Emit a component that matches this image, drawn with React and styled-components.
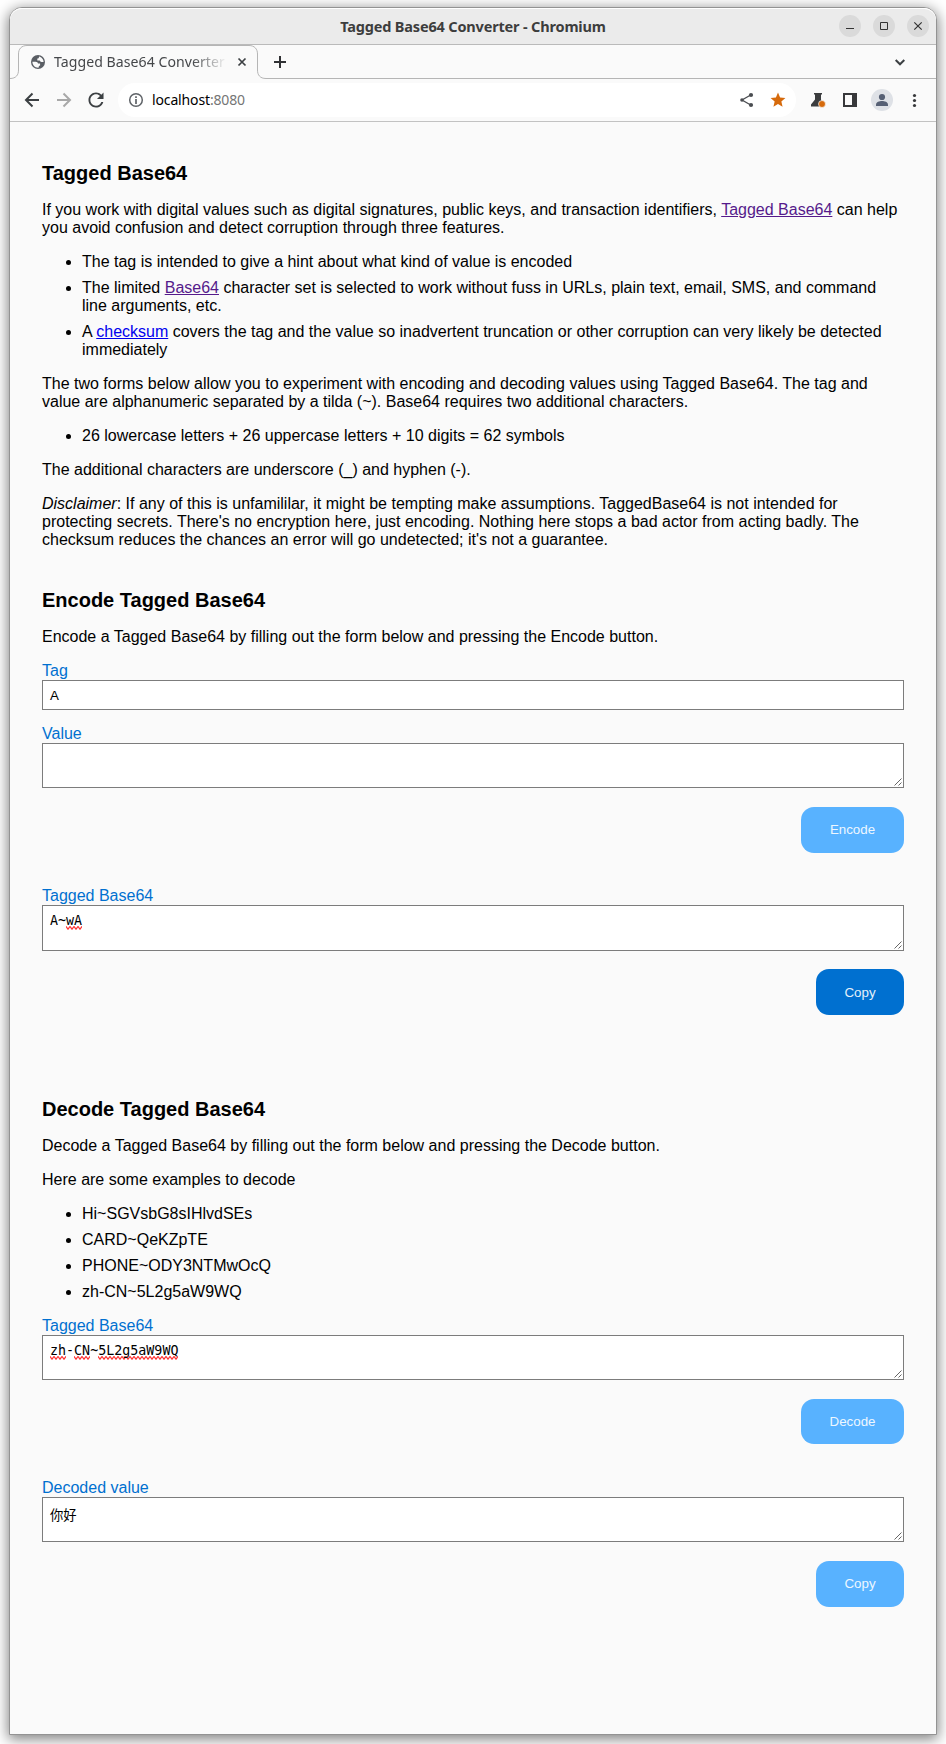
import React from "react";
import styled, { createGlobalStyle } from "styled-components";

const GlobalStyle = createGlobalStyle`
  * { box-sizing: border-box; }
  html, body { margin: 0; padding: 0; background: #fff; }
  body {
    width: 946px;
    height: 1744px;
    overflow: hidden;
    font-family: "Liberation Sans", Arial, sans-serif;
    font-size: 16px;
    line-height: 18px;
    color: #000;
  }
`;

const Desktop = styled.div`
  width: 946px;
  height: 1744px;
  padding: 7px 9px 9px;
  overflow: hidden;
`;

const Window = styled.div`
  display: flex;
  flex-direction: column;
  height: 1728px;
  border: 1px solid #939393;
  border-radius: 13px 13px 0 0;
  background: #fafafa;
  box-shadow: 0 3px 14px 1px rgba(0, 0, 0, 0.5);
`;

const TitleBar = styled.header`
  display: grid;
  grid-template-columns: 112px 1fr 112px;
  align-items: center;
  flex: none;
  height: 37px;
  padding-right: 7px;
  border-bottom: 1px solid #bababa;
  border-radius: 12px 12px 0 0;
  background: #ebebeb;
  box-shadow: inset 0 1px 0 #fff;
`;

const WindowTitle = styled.div`
  grid-column: 2;
  padding-left: 7px;
  font: 700 14.5px/20px "Noto Sans", sans-serif;
  letter-spacing: -0.17px;
  color: #3d3d3d;
  text-align: center;
  white-space: nowrap;
`;

const WindowControls = styled.div`
  display: flex;
  gap: 12px;
  justify-content: flex-end;
`;

const ControlButton = styled.span`
  width: 22px;
  height: 22px;
  border-radius: 50%;
  background: #dadada;
  svg { display: block; }
`;

const TabStrip = styled.div`
  display: flex;
  flex: none;
  height: 34px;
`;

const Tab = styled.div`
  position: relative;
  display: flex;
  align-items: center;
  width: 256px;
  padding: 0 10px 0 21px;
`;

const TabOutline = styled.svg`
  position: absolute;
  inset: 0;
`;

const TabTitle = styled.div`
  width: 173px;
  margin: 0 11px 0 9px;
  overflow: hidden;
  font: 400 14.1px/20px "Noto Sans", sans-serif;
  letter-spacing: 0.05px;
  color: #45474a;
  white-space: nowrap;
  mask-image: linear-gradient(to right, #000 138px, transparent 173px);
`;

const StripRest = styled.div`
  display: flex;
  flex: 1;
  justify-content: space-between;
  align-items: center;
  padding: 1px 31px 0 6px;
  border-bottom: 1px solid #b5b5b5;
`;

const Toolbar = styled.div`
  display: flex;
  align-items: center;
  flex: none;
  height: 43px;
  padding: 0 14px 0 14px;
  border-bottom: 1px solid #c2c2c2;
`;

const NavButtons = styled.div`
  display: flex;
  gap: 16px;
  width: 94px;
`;

const AddressBar = styled.div`
  display: flex;
  align-items: center;
  width: 678px;
  height: 34px;
  padding: 0 10px 0 10px;
  border-radius: 17px;
  background: #fff;
`;

const Url = styled.div`
  flex: 1;
  margin-left: 8px;
  font: 400 14px/20px "Noto Sans", sans-serif;
  letter-spacing: -0.14px;
  color: #000;
  span { color: #757575; }
`;

const AddressActions = styled.div`
  display: flex;
  gap: 15px;
`;

const ToolbarActions = styled.div`
  display: flex;
  flex: 1;
  align-items: center;
  gap: 16px;
  padding-left: 14px;
`;

const Icon = styled.svg`
  display: block;
  flex: none;
  overflow: visible;
`;

const Page = styled.main`
  padding: 40px 32px 0;
`;

const Section = styled.section`
  margin-bottom: ${(p) => p.$gap || 0}px;
`;

const Heading = styled.h2`
  margin: 0 0 16px;
  font-size: 20px;
  line-height: 23px;
`;

const Paragraph = styled.p`
  margin: 0 0 16px;
`;

const List = styled.ul`
  display: flex;
  flex-direction: column;
  gap: 8px;
  margin: 0 0 16px;
  padding-left: 40px;
`;

const Link = styled.a`
  color: ${(p) => (p.$visited ? "#551a8b" : "#0000ee")};
  text-decoration: underline;
`;

const Field = styled.div`
  margin-bottom: ${(p) => p.$gap}px;
`;

const Label = styled.label`
  display: block;
  color: #0070d0;
`;

const TextInput = styled.div`
  height: 30px;
  padding: 6px 7px;
  border: 1px solid #7c7c7c;
  background: #fff;
  font-size: 13.333px;
  line-height: 17px;
`;

const TextArea = styled.div`
  position: relative;
  height: ${(p) => p.$height || 45}px;
  padding: ${(p) => (p.$cjk ? 10 : 7)}px 7px 0;
  border: 1px solid #7c7c7c;
  background: #fff;
  font: 13.333px/16px "DejaVu Sans Mono", "Noto Sans CJK SC", monospace;
`;

const Grip = styled.svg`
  position: absolute;
  right: 1px;
  bottom: 1px;
`;

const Misspelled = styled.span`
  padding-bottom: 2px;
  background: url("data:image/svg+xml,%3Csvg xmlns='http://www.w3.org/2000/svg' width='4' height='4'%3E%3Cpath d='M-1 1.500L0 .500L2 3.200L4 .500L5 1.500' fill='none' stroke='%23f33' stroke-width='1.200'/%3E%3C/svg%3E")
    0 100% / 4px 4px repeat-x;
`;

const Actions = styled.div`
  display: flex;
  justify-content: flex-end;
  margin-bottom: ${(p) => p.$gap || 0}px;
`;

const Button = styled.button`
  width: ${(p) => p.$width}px;
  height: ${(p) => p.$height || 46}px;
  padding: 0 0 ${(p) => p.$lift || 0}px;
  border: 0;
  border-radius: 13px;
  background: ${(p) => (p.$active ? "#0070d0" : "#58b2ff")};
  color: ${(p) => (p.$active ? "#e4f0fa" : "#edf7ff")};
  font: 13.333px "Liberation Sans", Arial, sans-serif;
`;

function Area({ height, cjk, children }) {
  return (
    <TextArea $height={height} $cjk={cjk}>
      {children}
      <Grip width="8" height="8" viewBox="0 0 8 8" stroke="#555" strokeWidth="0.9" fill="none">
        <path d="M0.5 7.5 7.5 0.5M4.5 7.5 7.5 4.5" />
      </Grip>
    </TextArea>
  );
}

function BrowserChrome() {
  return (
    <>
      <TitleBar>
        <WindowTitle>Tagged Base64 Converter - Chromium</WindowTitle>
        <WindowControls>
          <ControlButton>
            <svg width="22" height="22"><path d="M7 13.5h8" stroke="#333" /></svg>
          </ControlButton>
          <ControlButton>
            <svg width="22" height="22"><path d="M7.5 7.5h7v7h-7z" stroke="#333" fill="none" /></svg>
          </ControlButton>
          <ControlButton>
            <svg width="22" height="22"><path d="M7.3 7.3 14.7 14.7M14.7 7.3 7.3 14.7" stroke="#333" strokeWidth="1.2" /></svg>
          </ControlButton>
        </WindowControls>
      </TitleBar>
      <TabStrip>
        <Tab>
          <TabOutline width="256" height="34" fill="none" stroke="#b5b5b5">
            <path d="M0 33.5C6 33.5 8.5 30 8.5 25V9C8.5 4 11.5 0.5 17 0.5H239C244.5 0.5 247.5 4 247.5 9V25C247.5 30 250 33.5 256 33.5" />
          </TabOutline>
          <Icon width="14" height="14" viewBox="2 2 20 20" fill="#5a5e64">
            <path fillRule="evenodd" d="M12 2a10 10 0 1 0 0 20 10 10 0 0 0 0-20zM4 11.500h4.500c2.500 0 3 1 3.500 2.500h3v3c-1.500 0-2 1-2 3-5 .500-9-3.500-9-8.500zM13.500 4c3.500.500 6.500 4 6.500 8h-3c-1.500 0-2-1-2.500-2H11V7c1.500 0 2.500-.500 2.500-3z" />
          </Icon>
          <TabTitle>Tagged Base64 Converter</TabTitle>
          <Icon width="8" height="8" stroke="#3c4043" strokeWidth="1.7">
            <path d="M0.5 0.5 7.5 7.5M7.5 0.5 0.5 7.5" />
          </Icon>
        </Tab>
        <StripRest>
          <Icon width="14" height="14" stroke="#303134" strokeWidth="2"><path d="M8 1V13M2 7H14" /></Icon>
          <Icon width="10" height="7" fill="none" stroke="#3c4043" strokeWidth="2"><path d="M0.700 1 5 5.300 9.300 1" /></Icon>
        </StripRest>
      </TabStrip>
      <Toolbar>
        <NavButtons>
          <Icon width="16" height="16" fill="none" stroke="#3c4043" strokeWidth="2"><path d="M15 8H2.5M8.5 1.5 2 8 8.5 14.5" /></Icon>
          <Icon width="16" height="16" fill="none" stroke="#a8a8a8" strokeWidth="2"><path d="M1 8H13.5M7.5 1.5 14 8 7.5 14.5" /></Icon>
          <Icon width="16" height="16" viewBox="3.5 3.5 17 17" fill="#3c4043">
            <path d="M17.65 6.35C16.2 4.9 14.21 4 12 4c-4.42 0-7.99 3.58-7.99 8s3.57 8 7.99 8c3.73 0 6.84-2.55 7.73-6h-2.08c-.82 2.33-3.04 4-5.65 4-3.31 0-6-2.69-6-6s2.69-6 6-6c1.66 0 3.14.69 4.22 1.78L13 11h7V4l-2.35 2.35z" />
          </Icon>
        </NavButtons>
        <AddressBar>
          <Icon width="16" height="16" viewBox="0 0 16 16" fill="none" stroke="#5f6368" strokeWidth="1.5">
            <circle cx="8" cy="8" r="6.3" /><path d="M8 7V12M8 4.3V6" strokeWidth="1.7" />
          </Icon>
          <Url>localhost<span>:8080</span></Url>
          <AddressActions>
            <Icon width="18" height="16" fill="#4a4d51" stroke="#4a4d51">
              <path d="M13.7 3 5 8 13.7 13" fill="none" strokeWidth="1.3" />
              <circle cx="5" cy="8" r="1.8" stroke="none" /><circle cx="14" cy="3" r="2.1" stroke="none" /><circle cx="14" cy="13" r="2.1" stroke="none" />
            </Icon>
            <Icon width="16" height="16" viewBox="1.2 1.2 21.6 21.6" fill="#d66a0c">
              <path d="M12 17.27 18.18 21l-1.64-7.03L22 9.24l-7.19-.61L12 2 9.19 8.63 2 9.24l5.46 4.73L5.82 21z" />
            </Icon>
          </AddressActions>
        </AddressBar>
        <ToolbarActions>
          <Icon width="16" height="16" fill="#3b3c3e">
            <path d="M4 1H12V2.5H11V7.5L14 14.5H1V12.5L5 7.5V2.5H4Z" />
            <circle cx="12" cy="12" r="3.5" fill="#d66a0c" stroke="#fafafa" strokeWidth="0.7" />
          </Icon>
          <Icon width="14" height="14" fill="#37383a"><path fillRule="evenodd" d="M1 0H15V14H1ZM3 2V12H10V2Z" /></Icon>
          <Icon width="22" height="22">
            <circle cx="10" cy="11" r="11" fill="#dee1e6" />
            <circle cx="10" cy="8" r="3.1" fill="#566074" />
            <path d="M4 17V15.5C4 13 7.5 12 10 12S16 13 16 15.5V17Z" fill="#566074" />
          </Icon>
          <Icon width="6" height="16" fill="#37383a"><circle cx="4.500" cy="3.5" r="1.6" /><circle cx="4.500" cy="8.5" r="1.6" /><circle cx="4.500" cy="13.5" r="1.6" /></Icon>
        </ToolbarActions>
      </Toolbar>
    </>
  );
}

export default function App() {
  return (
    <>
      <GlobalStyle />
      <Desktop>
        <Window>
          <BrowserChrome />
          <Page>
            <Section $gap={40}>
              <Heading>Tagged Base64</Heading>
              <Paragraph>
                If you work with digital values such as digital signatures, public keys, and transaction
                identifiers, <Link $visited>Tagged Base64</Link> can help you avoid confusion and detect
                corruption through three features.
              </Paragraph>
              <List>
                <li>The tag is intended to give a hint about what kind of value is encoded</li>
                <li>
                  The limited <Link $visited>Base64</Link> character set is selected to work without fuss
                  in URLs, plain text, email, SMS, and command line arguments, etc.
                </li>
                <li>
                  A <Link>checksum</Link> covers the tag and the value so inadvertent truncation or other
                  corruption can very likely be detected immediately
                </li>
              </List>
              <Paragraph>
                The two forms below allow you to experiment with encoding and decoding values using Tagged
                Base64. The tag and value are alphanumeric separated by a tilda (~). Base64 requires two
                additional characters.
              </Paragraph>
              <List>
                <li>26 lowercase letters + 26 uppercase letters + 10 digits = 62 symbols</li>
              </List>
              <Paragraph>The additional characters are underscore (_) and hyphen (-).</Paragraph>
              <Paragraph>
                <em>Disclaimer</em>: If any of this is unfamililar, it might be tempting make assumptions.
                TaggedBase64 is not intended for protecting secrets. There's no encryption here, just
                encoding. Nothing here stops a bad actor from acting badly. The checksum reduces the
                chances an error will go undetected; it's not a guarantee.
              </Paragraph>
            </Section>
            <Section $gap={83}>
              <Heading>Encode Tagged Base64</Heading>
              <Paragraph>
                Encode a Tagged Base64 by filling out the form below and pressing the Encode button.
              </Paragraph>
              <Field $gap={15}>
                <Label>Tag</Label>
                <TextInput>A</TextInput>
              </Field>
              <Field $gap={19}>
                <Label>Value</Label>
                <Area />
              </Field>
              <Actions $gap={34}>
                <Button $width={103} $lift={2}>Encode</Button>
              </Actions>
              <Field $gap={18}>
                <Label>Tagged Base64</Label>
                <Area height={46}>A~<Misspelled>wA</Misspelled></Area>
              </Field>
              <Actions>
                <Button $width={88} $active>Copy</Button>
              </Actions>
            </Section>
            <Section>
              <Heading>Decode Tagged Base64</Heading>
              <Paragraph>
                Decode a Tagged Base64 by filling out the form below and pressing the Decode button.
              </Paragraph>
              <Paragraph>Here are some examples to decode</Paragraph>
              <List>
                <li>Hi~SGVsbG8sIHlvdSEs</li>
                <li>CARD~QeKZpTE</li>
                <li>PHONE~ODY3NTMwOcQ</li>
                <li>zh-CN~5L2g5aW9WQ</li>
              </List>
              <Field $gap={19}>
                <Label>Tagged Base64</Label>
                <Area>
                  <Misspelled>zh</Misspelled>-<Misspelled>CN</Misspelled>~<Misspelled>5L2g5aW9WQ</Misspelled>
                </Area>
              </Field>
              <Actions $gap={35}>
                <Button $width={103} $height={45}>Decode</Button>
              </Actions>
              <Field $gap={19}>
                <Label>Decoded value</Label>
                <Area cjk>你好</Area>
              </Field>
              <Actions>
                <Button $width={88} $lift={2}>Copy</Button>
              </Actions>
            </Section>
          </Page>
        </Window>
      </Desktop>
    </>
  );
}
